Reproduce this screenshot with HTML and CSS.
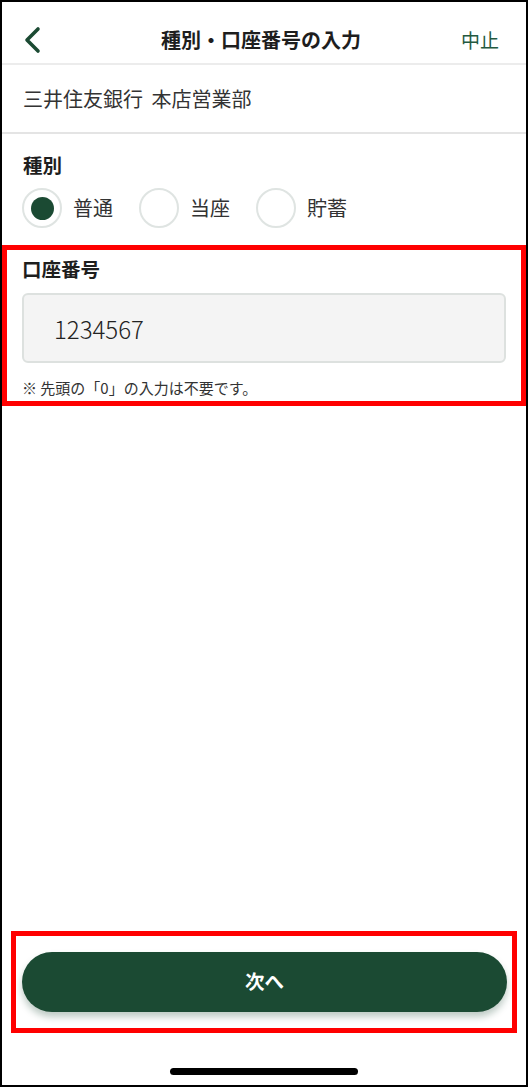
FILE: index.html
```html
<!DOCTYPE html>
<html lang="ja">
<head>
    <meta charset="UTF-8">
    <meta name="viewport" content="width=device-width, initial-scale=1.0">
    <title>種別・口座番号の入力</title>
    <link rel="stylesheet" href="styles.css">
</head>
<body>
    <div class="phone">
        <header class="header">
            <button class="back" aria-label="戻る">
                <svg width="18" height="28" viewBox="0 0 18 28">
                    <polyline points="15,3 4,14 15,25" fill="none" stroke="#1b4a33" stroke-width="3.6" stroke-linecap="round" stroke-linejoin="round"/>
                </svg>
            </button>
            <h1>種別・口座番号の入力</h1>
            <a class="cancel" href="#">中止</a>
        </header>

        <div class="bank-name">三井住友銀行 本店営業部</div>

        <section class="type-section">
            <h2>種別</h2>
            <div class="radio-group">
                <label class="radio checked"><span class="dot"></span>普通</label>
                <label class="radio"><span class="dot"></span>当座</label>
                <label class="radio"><span class="dot"></span>貯蓄</label>
            </div>
        </section>

        <section class="account-section">
            <h2>口座番号</h2>
            <input class="account-input" type="text" value="1234567" inputmode="numeric">
            <p class="note">※ 先頭の「0」の入力は不要です。</p>
        </section>

        <div class="spacer"></div>

        <div class="footer">
            <div class="next-box">
                <button class="next">次へ</button>
            </div>
            <div class="home-bar"></div>
        </div>
    </div>
</body>
</html>
```

FILE: styles.css
```css
:root {
    --green: #1b4a33;
    --green-text: #24593f;
    --text-primary: #1e1e1e;
    --text-secondary: #333333;
    --border-color: #ececec;
    --mark-red: #ff0000;
}

* {
    margin: 0;
    padding: 0;
    box-sizing: border-box;
}

body {
    font-family: "Noto Sans CJK JP", "Noto Sans", sans-serif;
    color: var(--text-primary);
    background: #fff;
}

.phone {
    width: 528px;
    height: 1087px;
    border: 2px solid #000;
    display: flex;
    flex-direction: column;
}

.header {
    height: 63px;
    padding: 14px 27px 0 21px;
    display: flex;
    align-items: center;
    justify-content: space-between;
    border-bottom: 2px solid var(--border-color);
}

.back {
    background: none;
    border: none;
    width: 40px;
    display: flex;
    align-items: center;
}

.header h1 {
    font-size: 20px;
    font-weight: 700;
    line-height: 28px;
}

.cancel {
    width: 40px;
    text-align: right;
    font-size: 19px;
    line-height: 28px;
    color: var(--green-text);
    text-decoration: none;
}

.bank-name {
    height: 69px;
    padding: 20px 21px 0;
    font-size: 20px;
    line-height: 28px;
    color: var(--text-secondary);
    word-spacing: 4px;
    border-bottom: 2px solid #e4e4e4;
}

h2 {
    font-size: 19.5px;
    font-weight: 700;
    line-height: 28px;
}

.type-section {
    padding: 17px 20px 17px 21px;
}

.radio-group {
    display: flex;
    gap: 26px;
    margin-top: 9px;
    margin-left: -1px;
}

.radio {
    display: flex;
    align-items: center;
    gap: 11px;
    font-size: 20px;
    line-height: 40px;
    color: var(--text-secondary);
}

.dot {
    width: 40px;
    height: 40px;
    border-radius: 50%;
    border: 2px solid #dfe4e2;
    display: flex;
    align-items: center;
    justify-content: center;
}

.radio.checked .dot::after {
    content: "";
    width: 23px;
    height: 23px;
    border-radius: 50%;
    background: var(--green);
}

.account-section {
    border: 5px solid var(--mark-red);
    padding: 5px 15px 3px;
}

.account-input {
    display: block;
    width: 100%;
    height: 70px;
    margin-top: 10px;
    padding-left: 30px;
    font-family: "Noto Sans CJK JP", "Noto Sans", sans-serif;
    font-size: 24px;
    font-weight: 300;
    color: #222;
    background: #f4f4f4;
    border: 2px solid #dde1df;
    border-radius: 6px;
    outline: none;
}

.note {
    margin-top: 15px;
    font-size: 15px;
    line-height: 20px;
    color: var(--text-secondary);
}

.spacer {
    flex: 1;
}

.footer {
    padding: 0 9px 10px;
}

.next-box {
    border: 5px solid var(--mark-red);
    padding: 16px 5px 16px 6px;
}

.next {
    display: block;
    width: 100%;
    height: 60px;
    padding-bottom: 3px;
    border: none;
    border-radius: 30px;
    background: var(--green);
    color: #fff;
    font-family: "Noto Sans CJK JP", sans-serif;
    font-size: 19.5px;
    font-weight: 700;
    box-shadow: 0 5px 7px rgba(20, 70, 45, 0.28);
}

.home-bar {
    width: 188px;
    height: 7px;
    margin: 35px auto 0;
    border-radius: 4px;
    background: #000;
}
```
